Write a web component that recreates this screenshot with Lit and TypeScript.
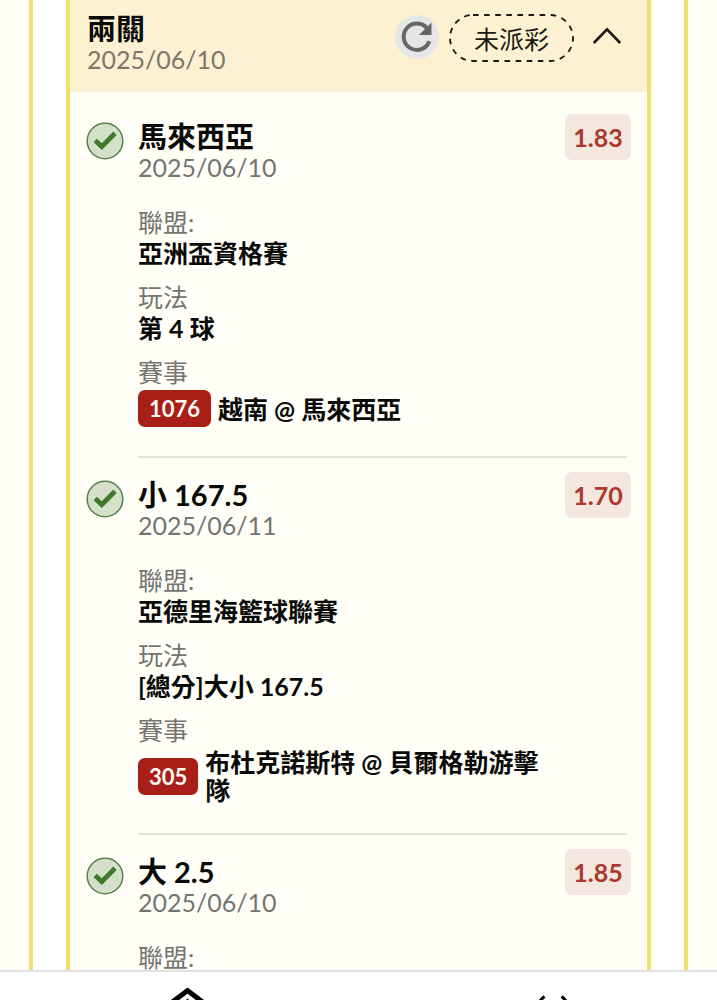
import { LitElement, html, css } from "lit";
import { customElement, property } from "lit/decorators.js";

interface Leg {
  pick: string;
  date: string;
  odds: string;
  league: string;
  market: string;
  code: string;
  teams: string;
}

const LEGS: Leg[] = [
  { pick: "馬來西亞", date: "2025/06/10", odds: "1.83", league: "亞洲盃資格賽", market: "第 4 球", code: "1076", teams: "越南 @ 馬來西亞" },
  { pick: "小 167.5", date: "2025/06/11", odds: "1.70", league: "亞德里海籃球聯賽", market: "[總分]大小 167.5", code: "305", teams: "布杜克諾斯特 @ 貝爾格勒游擊隊" },
  { pick: "大 2.5", date: "2025/06/10", odds: "1.85", league: "", market: "", code: "", teams: "" },
];

@customElement("bet-leg")
class BetLeg extends LitElement {
  @property({ attribute: false }) leg!: Leg;

  static styles = css`
    :host { display: block; }
    .leg {
      display: grid;
      grid-template-columns: 38px minmax(0, 1fr) auto;
      column-gap: 14px;
      padding: 22px 16px 0;
    }
    .status { display: block; width: 38px; height: 38px; }
    .odds {
      box-sizing: border-box;
      min-width: 66px;
      height: 46px;
      margin-top: -8px;
      padding: 0 7px;
      border-radius: 7px;
      background: #f4e7e0;
      color: #a93a2d;
      font-size: 25px;
      font-weight: 700;
      line-height: 47px;
      text-align: center;
    }
    .pick { margin: 0; font-size: 29px; line-height: 30px; font-weight: 700; color: #0a0a08; }
    .date { font-size: 25px; line-height: 30px; color: #747470; }
    .facts { margin: 24px 0 0; display: grid; gap: 13px; }
    dt { font-size: 25px; line-height: 32px; color: #747470; }
    dd { margin: 0; font-size: 25px; line-height: 30px; font-weight: 700; color: #0a0a08; }
    .match { display: flex; align-items: center; gap: 7px; padding-top: 2px; line-height: 28px; }
    .code {
      flex: none;
      padding: 0 11px;
      border-radius: 7px;
      background: #a71f17;
      color: #fff8f4;
      font-size: 22px;
      line-height: 37px;
      font-weight: 700;
    }
    .rule { height: 2px; margin: 29px 20px 0 68px; border: 0; background: #e5e5de; }
  `;

  render() {
    const l = this.leg;
    return html`
      <article class="leg">
        <svg class="status" viewBox="0 0 38 38" aria-label="勝" role="img">
          <circle cx="19" cy="19" r="17.8" fill="#d5e0cb" stroke="#57804b" stroke-width="1.5" />
          <path d="M9.2 18.4 15.8 24.6 29 11.2" fill="none" stroke="#407a2d" stroke-width="4.8" />
        </svg>
        <div>
          <h3 class="pick">${l.pick}</h3>
          <div class="date">${l.date}</div>
          <dl class="facts">
            <div><dt>聯盟:</dt>${l.league ? html`<dd>${l.league}</dd>` : ""}</div>
            ${l.market ? html`<div><dt>玩法</dt><dd>${l.market}</dd></div>` : ""}
            ${l.teams
              ? html`<div><dt>賽事</dt><dd class="match"><span class="code">${l.code}</span><span>${l.teams}</span></dd></div>`
              : ""}
          </dl>
        </div>
        <div class="odds">${l.odds}</div>
      </article>
      ${l.teams ? html`<hr class="rule" />` : ""}
    `;
  }
}

@customElement("app-root")
class AppRoot extends LitElement {
  static styles = css`
    :host {
      display: flex;
      flex-direction: column;
      height: 100vh;
      overflow: hidden;
      background: #fffff8;
      font-family: Lato, "Noto Sans CJK TC", sans-serif;
    }
    .scroll { flex: 1; min-height: 0; overflow: hidden; display: flex; padding: 0 29px; }
    .outer {
      flex: 1;
      min-width: 0;
      display: flex;
      padding: 0 33px;
      border: solid #f2de6c;
      border-width: 0 4px;
      background: #fff;
    }
    .slip {
      flex: 1;
      min-width: 0;
      border: solid #f2de6c;
      border-width: 0 4px;
      background: #fffff8;
    }
    .head {
      display: flex;
      justify-content: space-between;
      padding: 14px 25px 18px 17px;
      background: #fcf2d1;
    }
    .title { margin: 0; font-size: 29px; line-height: 30px; font-weight: 700; color: #0a0a08; }
    .date { font-size: 25px; line-height: 30px; color: #7d7868; }
    .tools { display: flex; align-items: center; align-self: flex-start; gap: 10px; height: 48px; }
    button { border: 0; padding: 0; background: none; display: block; }
    button svg { display: block; }
    .refresh { width: 44px; height: 44px; margin-bottom: 2px; border-radius: 50%; background: #e5e6e7; }
    .state { display: block; position: relative; width: 125px; height: 48px; text-align: center; font-size: 25px; line-height: 50px; color: #1c1a14; }
    .state svg { position: absolute; inset: 0; }
    .fold { display: flex; justify-content: flex-end; width: 38px; margin-bottom: 4px; }
    .legs { padding-top: 8px; }
    .nav {
      display: flex;
      justify-content: space-between;
      box-sizing: border-box;
      height: 30px;
      overflow: hidden;
      padding: 16px 147px 0 170px;
      border-top: 2px solid #e2e2e2;
      background: #fff;
    }
    .nav svg { display: block; }
  `;

  render() {
    return html`
      <main class="scroll">
        <div class="outer">
          <section class="slip">
            <header class="head">
              <div>
                <h2 class="title">兩關</h2>
                <div class="date">2025/06/10</div>
              </div>
              <div class="tools">
                <button class="refresh" aria-label="重新整理">
                  <svg width="44" height="44" viewBox="0 0 44 44">
                    <path d="M34.3 26.2A13.2 13.2 0 1 1 32 13.2" fill="none" stroke="#666664" stroke-width="4" />
                    <path d="M36.5 7.5V20H24Z" fill="#666664" />
                  </svg>
                </button>
                <span class="state">
                  <svg width="125" height="48" viewBox="0 0 125 48" aria-hidden="true">
                    <rect x="1" y="1" width="123" height="46" rx="23" fill="none" stroke="#1c1a10" stroke-width="1.8" stroke-dasharray="5.6 5.5" />
                  </svg>
                  未派彩
                </span>
                <button class="fold" aria-label="收合">
                  <svg width="30" height="20" viewBox="0 0 30 20">
                    <path d="M1.8 17 15 3.4 28.2 17" fill="none" stroke="#1c1a14" stroke-width="2.6" />
                  </svg>
                </button>
              </div>
            </header>
            <div class="legs">${LEGS.map((l) => html`<bet-leg .leg=${l}></bet-leg>`)}</div>
          </section>
        </div>
      </main>
      <nav class="nav">
        <a aria-label="首頁" href="#home">
          <svg width="36" height="36" viewBox="0 0 36 36">
            <path d="M1 15 17.5 2.600 34 15" fill="none" stroke="#000" stroke-width="5" />
            <circle cx="17.5" cy="12" r="1.2" fill="#000" />
          </svg>
        </a>
        <a aria-label="滾球" href="#live">
          <svg width="34" height="36" viewBox="0 0 34 36">
            <path d="M8.5 8.500Q3 12 2 20M25.500 8.500Q31 12 32 20" fill="none" stroke="#000" stroke-width="3.2" />
          </svg>
        </a>
      </nav>
    `;
  }
}
